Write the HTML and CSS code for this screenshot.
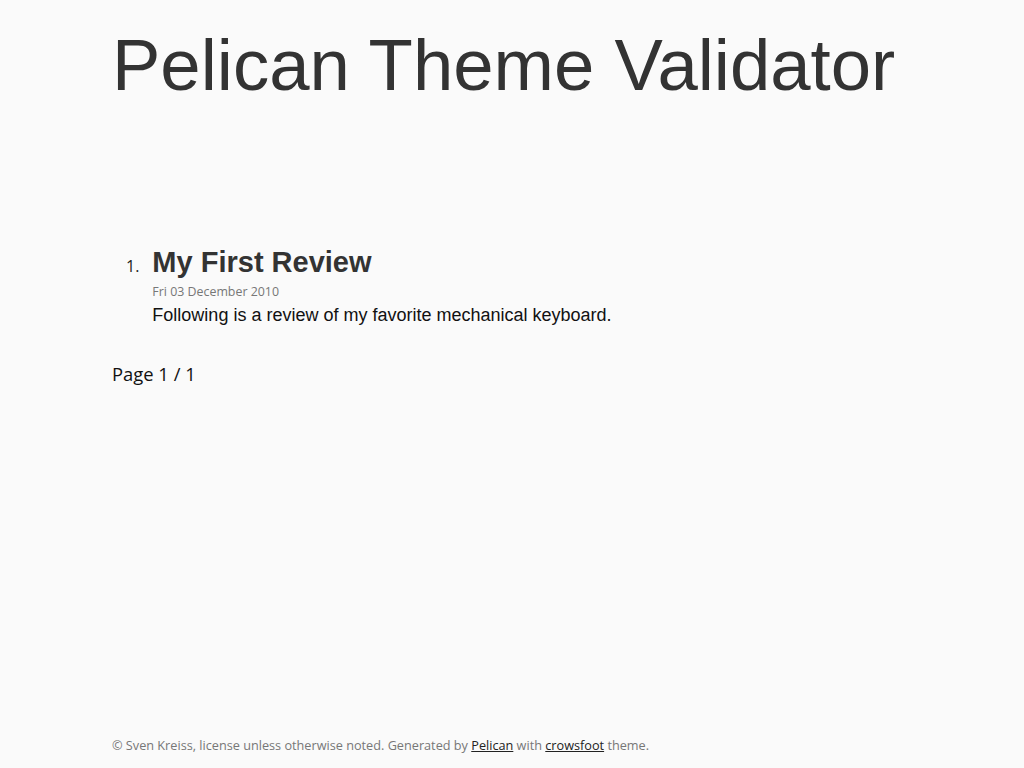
FILE: index.html
```html
<!DOCTYPE html>
<html>
<head>
<meta charset="utf-8">
<link rel="stylesheet" href="styles.css">
</head>
<body>
<div class="page">
  <header class="site-header">
    <h1 class="site-title">Pelican Theme Validator</h1>
  </header>
  <main class="main">
    <ol class="articles">
      <li class="article">
        <span class="article-num">1.</span>
        <div class="article-body">
          <h2 class="article-title">My First Review</h2>
          <div class="article-date">Fri 03 December 2010</div>
          <p class="article-summary">Following is a review of my favorite mechanical keyboard.</p>
        </div>
      </li>
    </ol>
    <p class="pager">Page 1 / 1</p>
  </main>
  <footer class="footer">© Sven Kreiss, license unless otherwise noted. Generated by <a href="#">Pelican</a> with <a href="#">crowsfoot</a> theme.</footer>
</div>
</body>
</html>
```

FILE: styles.css
```css
html, body {
  margin: 0;
  padding: 0;
  background: #fafafa;
}
body {
  font-family: "Open Sans", sans-serif;
  color: #333;
}
.page {
  min-height: 768px;
  display: flex;
  flex-direction: column;
  padding: 0 112px;
  box-sizing: border-box;
}
.site-header {
  padding-top: 22px;
}
.site-title {
  margin: 0;
  font-family: "Liberation Sans", Arial, sans-serif;
  font-weight: normal;
  font-size: 72.5px;
  line-height: 86px;
  color: #333;
  white-space: nowrap;
}
.main {
  flex: 1;
  padding-top: 137px;
}
.articles {
  margin: 0;
  padding: 0 0 0 14px;
  list-style: none;
}
.article {
  display: flex;
  align-items: baseline;
  gap: 13px;
}
.article-num {
  font-family: "Open Sans", sans-serif;
  font-size: 16px;
  color: #222;
}
.article-title {
  margin: 0;
  font-family: "Liberation Sans", Arial, sans-serif;
  font-size: 29px;
  font-weight: bold;
  line-height: 34px;
  color: #333;
}
.article-date {
  font-size: 12.4px;
  color: #777;
  line-height: 18px;
  margin-top: 4px;
}
.article-summary {
  margin: 2px 0 0;
  font-family: "Liberation Sans", Arial, sans-serif;
  font-size: 18px;
  line-height: 24px;
  color: #111;
}
.pager {
  margin: 35px 0 0;
  font-size: 18.4px;
  line-height: 24px;
  color: #111;
}
.footer {
  font-size: 12.7px;
  color: #777;
  padding-bottom: 14px;
  line-height: 18px;
}
.footer a {
  color: #222;
  text-decoration: underline;
}
```
